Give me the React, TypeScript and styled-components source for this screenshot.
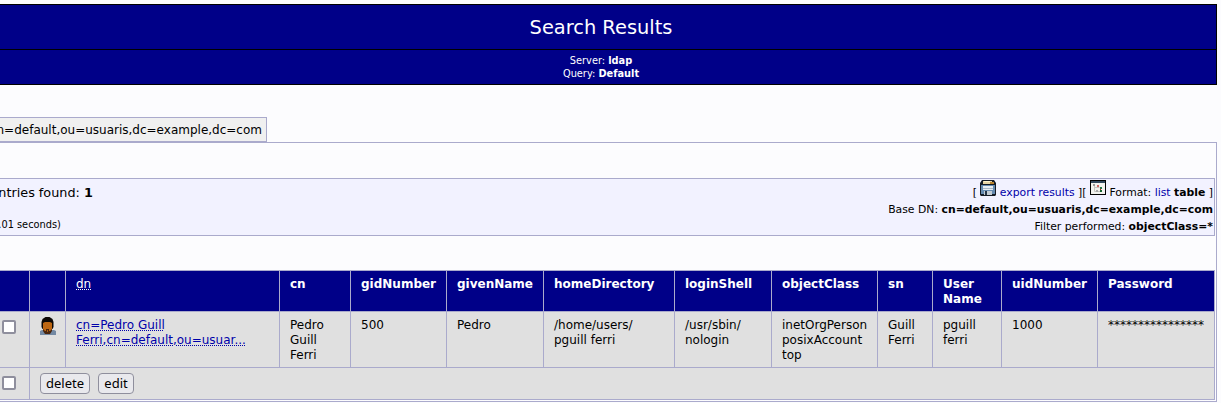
import React from "react";
import styled, { createGlobalStyle } from "styled-components";

const GlobalStyle = createGlobalStyle`
  *, *::before, *::after { box-sizing: border-box; }
  html, body { margin: 0; height: 100%; overflow: hidden; background: #fcfcfe; }
  body { font: 12px/15px "DejaVu Sans", sans-serif; color: #000; }
`;

const line = "#aaaacc";
const navy = "#000088";

const Page = styled.main`
  width: 1217px;
  height: 403px;
  padding-top: 4px;
  display: flex;
  flex-direction: column;
`;

const Header = styled.header`
  height: 81px;
  flex: none;
  border: 1px solid #000;
  border-left: 0;
  background: ${navy};
  color: #fff;
  text-align: center;
`;

const Title = styled.h1`
  margin: 0;
  padding-right: 14px;
  height: 45px;
  border-bottom: 1px solid #000;
  font-size: 19.4px;
  font-weight: 400;
  line-height: 46px;
`;

const Subtitle = styled.div`
  padding: 4px 14px 0 0;
  font-size: 9.8px;
  line-height: 13px;
`;

const Tab = styled.div`
  flex: none;
  margin-top: 32px;
  width: 267px;
  height: 25px;
  padding: 1px 4px 0 0;
  border: 1px solid ${line};
  border-left: 0;
  background: #f0f0f0;
  text-indent: -3.5px;
  line-height: 22px;
  white-space: nowrap;
`;

const Panel = styled.section`
  flex: none;
  height: 260px;
  padding: 35px 1px 0 0;
  border: 1px solid ${line};
  border-left: 0;
`;

const Summary = styled.div`
  height: 58px;
  padding: 5px 1px 0 0;
  border: 1px solid ${line};
  border-left: 0;
  background: #f2f2ff;
  display: flex;
  justify-content: space-between;
  white-space: nowrap;
`;

const Counts = styled.div`
  margin-left: -1.7px;
  font-size: 12.8px;
  line-height: 17px;
`;

const Timing = styled.div`
  margin-top: 15px;
  font-size: 9.8px;
`;

const Details = styled.div`
  text-align: right;
  font-size: 10.84px;
  line-height: 17px;
`;

const Link = styled.a`
  color: #0000aa;
`;

const ToolIcon = styled.svg`
  width: 16px;
  height: 16px;
  vertical-align: 0;
  margin-top: -4px;
`;

const Results = styled.table`
  width: 1215px;
  margin-top: 34px;
  table-layout: fixed;
  border-collapse: separate;
  border-spacing: 0;
  border-top: 1px solid ${line};
`;

const Row = styled.tr<{ $h: number }>`
  height: ${(p) => p.$h}px;
`;

const Cell = styled.td`
  padding: 6px 0 0 10px;
  vertical-align: top;
  border: solid ${line};
  border-width: 0 1px 1px 0;
  background: #e0e0e0;
  white-space: nowrap;
`;

const HeadCell = styled(Cell).attrs({ as: "th" })`
  background: ${navy};
  color: #fff;
  text-align: left;
  font-weight: 700;
`;

const Dotted = styled.span<{ $head?: boolean }>`
  color: ${(p) => (p.$head ? "#fff" : "#0000aa")};
  font-weight: 400;
  text-decoration: underline dotted 1px;
  text-underline-offset: 1px;
`;

const CheckCell = styled(Cell)`
  padding: 8px 0 0 2px;
`;

const Check = styled.input.attrs({ type: "checkbox" })`
  appearance: none;
  display: block;
  margin: 0;
  width: 14px;
  height: 14px;
  border: 2px solid #8f8f9d;
  border-radius: 2px;
  background: #fff;
`;

const Avatar = styled.svg`
  display: block;
  width: 16px;
  height: 18px;
  margin-top: -1px;
`;

const AvatarCell = styled(Cell)`
  padding-left: 9.5px;
`;

const ActionCell = styled(Cell)`
  padding-top: 5px;
`;

const Actions = styled.div`
  display: flex;
  gap: 8px;
`;

const Button = styled.button<{ $w: number }>`
  width: ${(p) => p.$w}px;
  height: 21px;
  padding: 0;
  border: 1px solid #8f8f9d;
  border-radius: 4px;
  background: #e9e9ed;
  color: #000;
  font: 13px/19px "Noto Sans", sans-serif;
`;

const widths = [30, 36, 214, 71, 96, 97, 131, 97, 106, 55, 69, 96, 117];

const columns: { name: string[]; values: string[] }[] = [
  { name: ["cn"], values: ["Pedro", "Guill", "Ferri"] },
  { name: ["gidNumber"], values: ["500"] },
  { name: ["givenName"], values: ["Pedro"] },
  { name: ["homeDirectory"], values: ["/home/users/", "pguill ferri"] },
  { name: ["loginShell"], values: ["/usr/sbin/", "nologin"] },
  { name: ["objectClass"], values: ["inetOrgPerson", "posixAccount", "top"] },
  { name: ["sn"], values: ["Guill", "Ferri"] },
  { name: ["User", "Name"], values: ["pguill", "ferri"] },
  { name: ["uidNumber"], values: ["1000"] },
  { name: ["Password"], values: ["****************"] },
];

const Lines = ({ items }: { items: string[] }) => (
  <>
    {items.map((t) => (
      <div key={t}>{t}</div>
    ))}
  </>
);

const SaveIcon = () => (
  <ToolIcon viewBox="0 0 16 16">
    <path d="M2 0h12l2 3v12l-1 1H1l-1-1V3z" fill="#151b25" />
    <path d="M1 5h14v9H1z" fill="#668bb0" />
    <path d="M3 6h10v4H3z" fill="#e8edf2" />
    <path d="M3 8h10v1H3z" fill="#a8b7c6" />
    <path d="M4 11h8v4H4z" fill="#c3ccd3" />
    <path d="M5 11h2v4H5z" fill="#253446" />
    <path d="M3 1h9v3H3z" fill="#e6d3a2" />
    <path d="M4 1h6v1H4z" fill="#fff3cb" />
    <path d="M10 2h4v2h-4z" fill="#b9822d" />
  </ToolIcon>
);

const TreeIcon = () => (
  <ToolIcon viewBox="0 0 16 16">
    <path d="M0 0h16v15H0z" fill="#000" />
    <path d="M1 1h14v2H1z" fill="#31485e" />
    <path d="M1 3h14v11H1z" fill="#f2f2ee" />
    <path d="M4.500 5v6.500h6M4.500 7.500h5" fill="none" stroke="#c4c4c0" />
    <path d="M3 4h2v2H3z" fill="#999" />
    <path d="M7 5h2v2H7z" fill="#c66" />
    <path d="M10 7h2v2h-2z" fill="#287548" />
    <path d="M6 10h2v2H6z" fill="#aaa" />
    <path d="M10 10h2v2h-2z" fill="#16632d" />
    <path d="M10 9h1v1h-1z" fill="#c22" />
  </ToolIcon>
);

export default function App() {
  return (
    <>
      <GlobalStyle />
      <Page>
        <Header>
          <Title>Search Results</Title>
          <Subtitle>
            <div>Server: <b>ldap</b></div>
            <div>Query: <b>Default</b></div>
          </Subtitle>
        </Header>
        <Tab>n=default,ou=usuaris,dc=example,dc=com</Tab>
        <Panel>
          <Summary>
            <Counts>
              <div>ntries found: <b>1</b></div>
              <Timing>.01 seconds)</Timing>
            </Counts>
            <Details>
              <div>
                [ <SaveIcon /> <Link>export results</Link> ][ <TreeIcon /> Format: <Link>list</Link> <b>table</b> ]
              </div>
              <div>Base DN: <b>cn=default,ou=usuaris,dc=example,dc=com</b></div>
              <div>Filter performed: <b>objectClass=*</b></div>
            </Details>
          </Summary>
          <Results>
            <colgroup>
              {widths.map((w, i) => (
                <col key={i} width={w} />
              ))}
            </colgroup>
            <tbody>
              <Row $h={41}>
                <HeadCell />
                <HeadCell />
                <HeadCell><Dotted $head>dn</Dotted></HeadCell>
                {columns.map((c) => (
                  <HeadCell key={c.name[0]}><Lines items={c.name} /></HeadCell>
                ))}
              </Row>
              <Row $h={56}>
                <CheckCell><Check /></CheckCell>
                <AvatarCell>
                  <Avatar viewBox="0 0 16 18">
                    <path d="M0 18v-4l2-1h12l2 1v4z" fill="#7389a3" />
                    <path d="M1.500 5l1-3 3-2h4l3 2 1 3v5l-1 2h-10l-1-2z" fill="#0c0805" />
                    <path d="M3 6l2-1h5l2 1v7l-2 3H5l-2-3z" fill="#bd6713" />
                    <path d="M3 12l2 2h1v-2h3v2h1l2-2v2l-2 3H5l-2-3z" fill="#4a260e" />
                    <path d="M7 13h1v2H7z" fill="#a35b19" />
                  </Avatar>
                </AvatarCell>
                <Cell>
                  <Dotted>cn=Pedro Guill</Dotted>
                  <br />
                  <Dotted>Ferri,cn=default,ou=usuar...</Dotted>
                </Cell>
                {columns.map((c) => (
                  <Cell key={c.name[0]}><Lines items={c.values} /></Cell>
                ))}
              </Row>
              <Row $h={32}>
                <CheckCell><Check /></CheckCell>
                <ActionCell colSpan={12}>
                  <Actions>
                    <Button $w={50}>delete</Button>
                    <Button $w={36}>edit</Button>
                  </Actions>
                </ActionCell>
              </Row>
            </tbody>
          </Results>
        </Panel>
      </Page>
    </>
  );
}
